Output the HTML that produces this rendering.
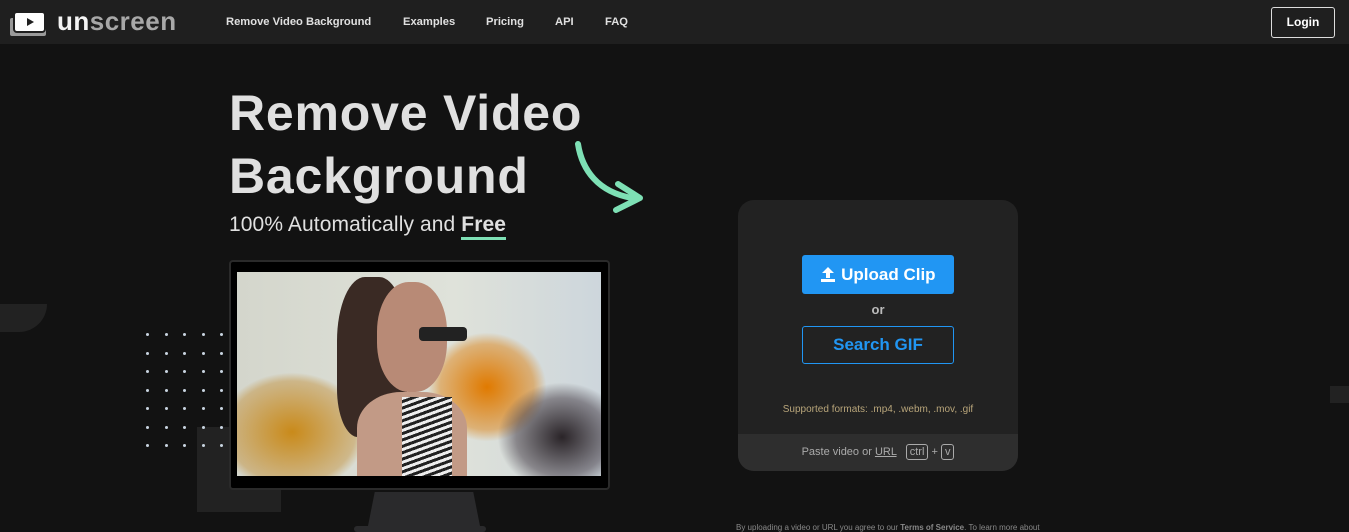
<!DOCTYPE html>
<html><head><style>
*{margin:0;padding:0;box-sizing:border-box}
body{width:1349px;height:532px;overflow:hidden;background:#121212;font-family:"Liberation Sans",sans-serif;position:relative;color:#ddd}
.nav{position:absolute;left:0;top:0;width:1349px;height:44px;background:#1f1f1f}
.nav a{position:absolute;top:16px;font-size:11.2px;font-weight:bold;color:#e0e0e0}
.abs{position:absolute}
.dot{position:absolute;width:3px;height:3px;border-radius:50%;background:#c8d4e0}
</style></head><body>
<div class="nav">
<svg class="abs" style="left:10px;top:11px" width="38" height="26"><rect x="0" y="7" width="36" height="18" rx="2" fill="#9a9a9a"/><rect x="4" y="1" width="31" height="20" rx="3" fill="#fff" stroke="#1f1f1f" stroke-width="2"/><path d="M17 7 L24 11 L17 15Z" fill="#1f1f1f"/></svg>
<div class="abs" style="left:57px;top:6px;font-size:26px;font-weight:bold;letter-spacing:0.5px"><span style="color:#f4f4f4">un</span><span style="color:#a8a8a8">screen</span></div>
<a style="left:226px">Remove Video Background</a>
<a style="left:403px">Examples</a>
<a style="left:486px">Pricing</a>
<a style="left:555px">API</a>
<a style="left:605px">FAQ</a>
<div class="abs" style="left:1271px;top:7px;width:64px;height:31px;border:1px solid #ddd;border-radius:3px;font-size:12px;font-weight:bold;color:#fff;text-align:center;line-height:29px">Login</div>
</div>
<div class="abs" style="left:0;top:304px;width:47px;height:28px;background:#222;border-radius:0 0 28px 0"></div>
<div class="abs" style="left:197px;top:427px;width:84px;height:85px;background:#222"></div>
<div class="abs" style="left:1330px;top:386px;width:19px;height:17px;background:#222"></div>
<div id="dots"></div>
<div class="abs" style="left:229px;top:82px;font-size:50px;font-weight:bold;color:#e0e0e0;line-height:63px;letter-spacing:0.8px">Remove Video<br>Background</div>
<svg class="abs" style="left:570px;top:140px" width="80" height="75"><path d="M8 4 C12 30 28 52 62 58" fill="none" stroke="#7ee0b5" stroke-width="6" stroke-linecap="round"/><path d="M48 44 L70 58 L46 70" fill="none" stroke="#7ee0b5" stroke-width="6" stroke-linecap="round" stroke-linejoin="round"/></svg>
<div class="abs" style="left:229px;top:213px;font-size:21px;color:#e0e0e0;letter-spacing:0.1px">100% Automatically and <b style="border-bottom:3px solid #7ee0b5;padding-bottom:1px">Free</b></div>
<div class="abs" style="left:229px;top:260px;width:381px;height:230px;background:#000;border-radius:4px;border:2px solid #2a2a2a"></div>
<div class="abs" style="left:237px;top:272px;width:364px;height:204px;overflow:hidden;background:linear-gradient(90deg,#d4d6cc,#dfe2da 60%,#cdd6dc)">
<div class="abs" style="left:-20px;top:100px;width:150px;height:120px;border-radius:50%;background:radial-gradient(#c98a1a,rgba(190,130,30,.4) 60%,transparent 70%)"></div>
<div class="abs" style="left:190px;top:60px;width:120px;height:110px;border-radius:50%;background:radial-gradient(#e07a00,rgba(220,130,20,.5) 55%,transparent 70%)"></div>
<div class="abs" style="left:260px;top:110px;width:130px;height:110px;border-radius:50%;background:radial-gradient(#2a2428,rgba(60,50,60,.5) 50%,transparent 70%)"></div>
<div class="abs" style="left:100px;top:5px;width:70px;height:160px;border-radius:40% 40% 20% 30%;background:#3a2a24"></div>
<div class="abs" style="left:140px;top:10px;width:70px;height:110px;border-radius:45%;background:#b88a76"></div>
<div class="abs" style="left:182px;top:55px;width:48px;height:14px;background:#222;border-radius:4px"></div>
<div class="abs" style="left:120px;top:120px;width:110px;height:90px;border-radius:40% 40% 0 0;background:#c29a86"></div>
<div class="abs" style="left:165px;top:125px;width:50px;height:80px;background:repeating-linear-gradient(160deg,#eee 0 3px,#222 3px 6px)"></div>
</div>
<div class="abs" style="left:368px;top:492px;width:112px;height:34px;background:#2a2a2c;clip-path:polygon(6% 0,94% 0,100% 100%,0 100%)"></div>
<div class="abs" style="left:354px;top:526px;width:132px;height:6px;background:#2a2a2c;border-radius:3px"></div>
<div class="abs" style="left:738px;top:200px;width:280px;height:271px;background:#222;border-radius:16px;overflow:hidden">
<div class="abs" style="left:64px;top:55px;width:152px;height:39px;background:#2196f3;border-radius:3px;color:#fff;font-size:17px;font-weight:bold;text-align:center;line-height:39px">
<svg width="16" height="16" style="vertical-align:-2px"><path d="M8 1 L14 7 H10 V12 H6 V7 H2Z M1 13 H15 V16 H1Z" fill="#fff"/></svg> Upload Clip</div>
<div class="abs" style="left:0;top:102px;width:280px;text-align:center;font-size:13px;font-weight:bold;color:#bbb">or</div>
<div class="abs" style="left:64px;top:126px;width:152px;height:38px;border:1px solid #2196f3;border-radius:3px;color:#2196f3;font-size:17px;font-weight:bold;text-align:center;line-height:36px">Search GIF</div>
<div class="abs" style="left:0;top:204px;width:280px;text-align:center;font-size:10px;color:#b8a57a">Supported formats: .mp4, .webm, .mov, .gif</div>
<div class="abs" style="left:0;top:234px;width:280px;height:37px;background:#2e2e2e;font-size:11px;color:#aaa;text-align:center;line-height:37px">Paste video or <u>URL</u> &nbsp; <span style="border:1px solid #aaa;border-radius:3px;padding:1px 3px">ctrl</span> + <span style="border:1px solid #aaa;border-radius:3px;padding:1px 3px">v</span></div>
</div>
<div class="abs" style="left:736px;top:523px;font-size:8px;color:#888;white-space:nowrap">By uploading a video or URL you agree to our <b>Terms of Service</b>. To learn more about</div>
<script>
var d=document.getElementById('dots'),h='';
for(var r=0;r<7;r++)for(var c=0;c<5;c++)h+='<div class="dot" style="left:'+(146+c*18.5)+'px;top:'+(333+r*18.5)+'px"></div>';
d.innerHTML=h;
</script>
</body></html>
